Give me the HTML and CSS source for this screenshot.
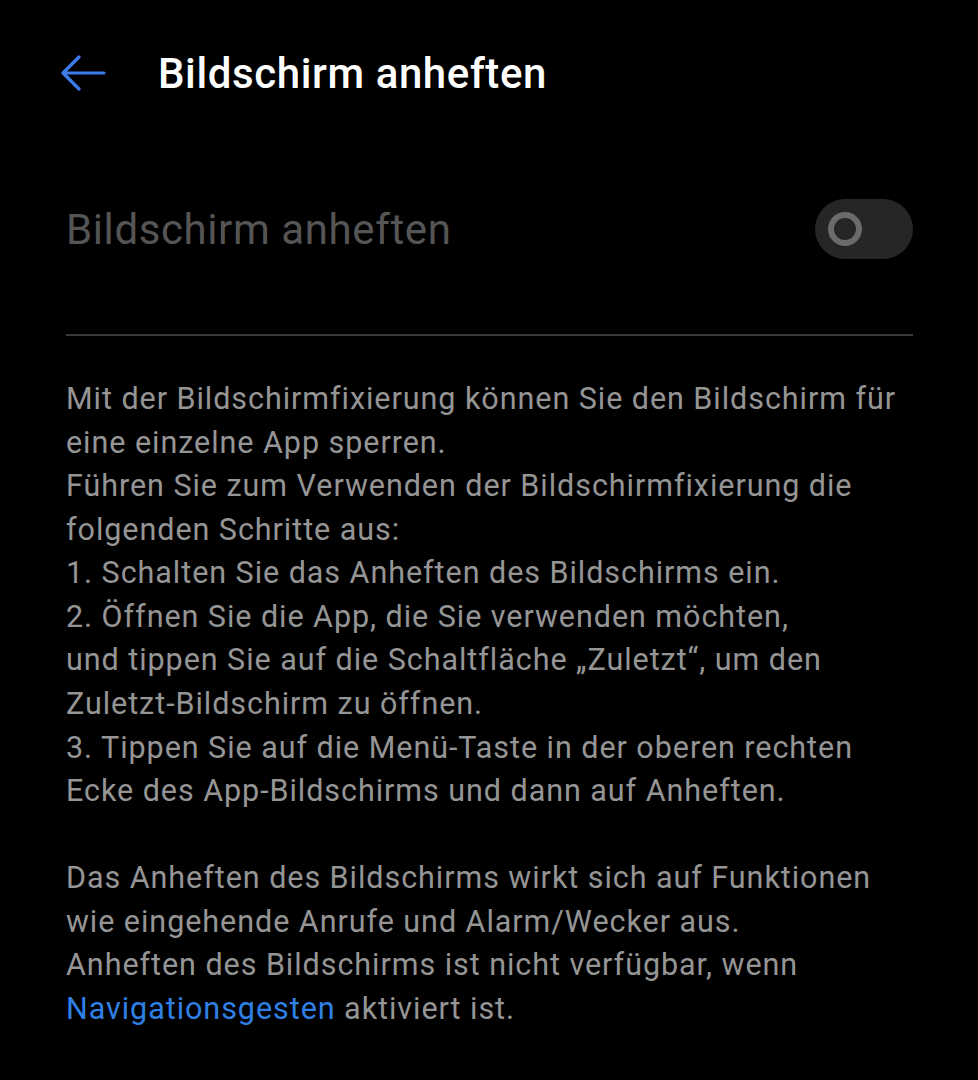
FILE: index.html
```html
<!DOCTYPE html>
<html lang="de">
<head>
    <meta charset="UTF-8">
    <meta name="viewport" content="width=device-width, initial-scale=1.0">
    <title>Bildschirm anheften</title>
    <link rel="stylesheet" href="styles.css">
</head>
<body>
    <header class="topbar">
        <button class="back" aria-label="Zurück">
            <svg width="46" height="36" viewBox="0 0 46 36">
                <path d="M44 18H3M19 2L3 18l16 16" fill="none" stroke="#3b7ce8" stroke-width="3.2" stroke-linecap="round" stroke-linejoin="round"/>
            </svg>
        </button>
        <h1 class="title">Bildschirm anheften</h1>
    </header>

    <main class="content">
        <div class="setting">
            <span class="setting-label">Bildschirm anheften</span>
            <span class="switch"><span class="thumb"></span></span>
        </div>
        <hr class="divider">

        <p class="desc">Mit der Bildschirmfixierung können Sie den Bildschirm für eine einzelne App sperren.<br>
        Führen Sie zum Verwenden der Bildschirmfixierung die folgenden Schritte aus:<br>
        1. Schalten Sie das Anheften des Bildschirms ein.<br>
        2. Öffnen Sie die App, die Sie verwenden möchten,<br>
        und tippen Sie auf die Schaltfläche „Zuletzt“, um den Zuletzt-Bildschirm zu öffnen.<br>
        3. Tippen Sie auf die Menü-Taste in der oberen rechten Ecke des App-Bildschirms und dann auf Anheften.</p>

        <p class="desc">Das Anheften des Bildschirms wirkt sich auf Funktionen wie eingehende Anrufe und Alarm/Wecker aus.<br>
        Anheften des Bildschirms ist nicht verfügbar, wenn <a class="link" href="#">Navigationsgesten</a> aktiviert ist.</p>
    </main>
</body>
</html>
```

FILE: styles.css
```css
body {
    margin: 0;
    background-color: #000;
    font-family: Roboto, "Liberation Sans", sans-serif;
    color: #fff;
}

.topbar {
    display: flex;
    align-items: center;
    height: 146px;
    padding-left: 60px;
}

.back {
    background: none;
    border: none;
    padding: 0;
    width: 46px;
    height: 36px;
    margin-right: 52px;
    cursor: pointer;
}

.title {
    margin: 0;
    font-size: 42px;
    font-weight: 500;
    letter-spacing: 0.6px;
    color: #fff;
}

.content {
    padding: 0 65px 0 66px;
}

.setting {
    display: flex;
    align-items: center;
    justify-content: space-between;
    height: 166px;
}

.setting-label {
    font-size: 42px;
    letter-spacing: 0.6px;
    color: #555;
}

.switch {
    display: flex;
    align-items: center;
    width: 98px;
    height: 60px;
    border-radius: 30px;
    background-color: #262626;
    padding-left: 13px;
    box-sizing: border-box;
}

.thumb {
    width: 22px;
    height: 22px;
    border: 6px solid #6b6b6b;
    border-radius: 50%;
}

.divider {
    margin: 22px 0 0;
    border: none;
    border-top: 2px solid #3a3a3a;
}

.desc {
    margin: 41px 0 0;
    font-size: 30.5px;
    line-height: 43.56px;
    letter-spacing: 0.95px;
    color: #959595;
}

.desc + .desc {
    margin-top: 43.56px;
}

.link {
    color: #2f80e4;
    text-decoration: none;
}
```
